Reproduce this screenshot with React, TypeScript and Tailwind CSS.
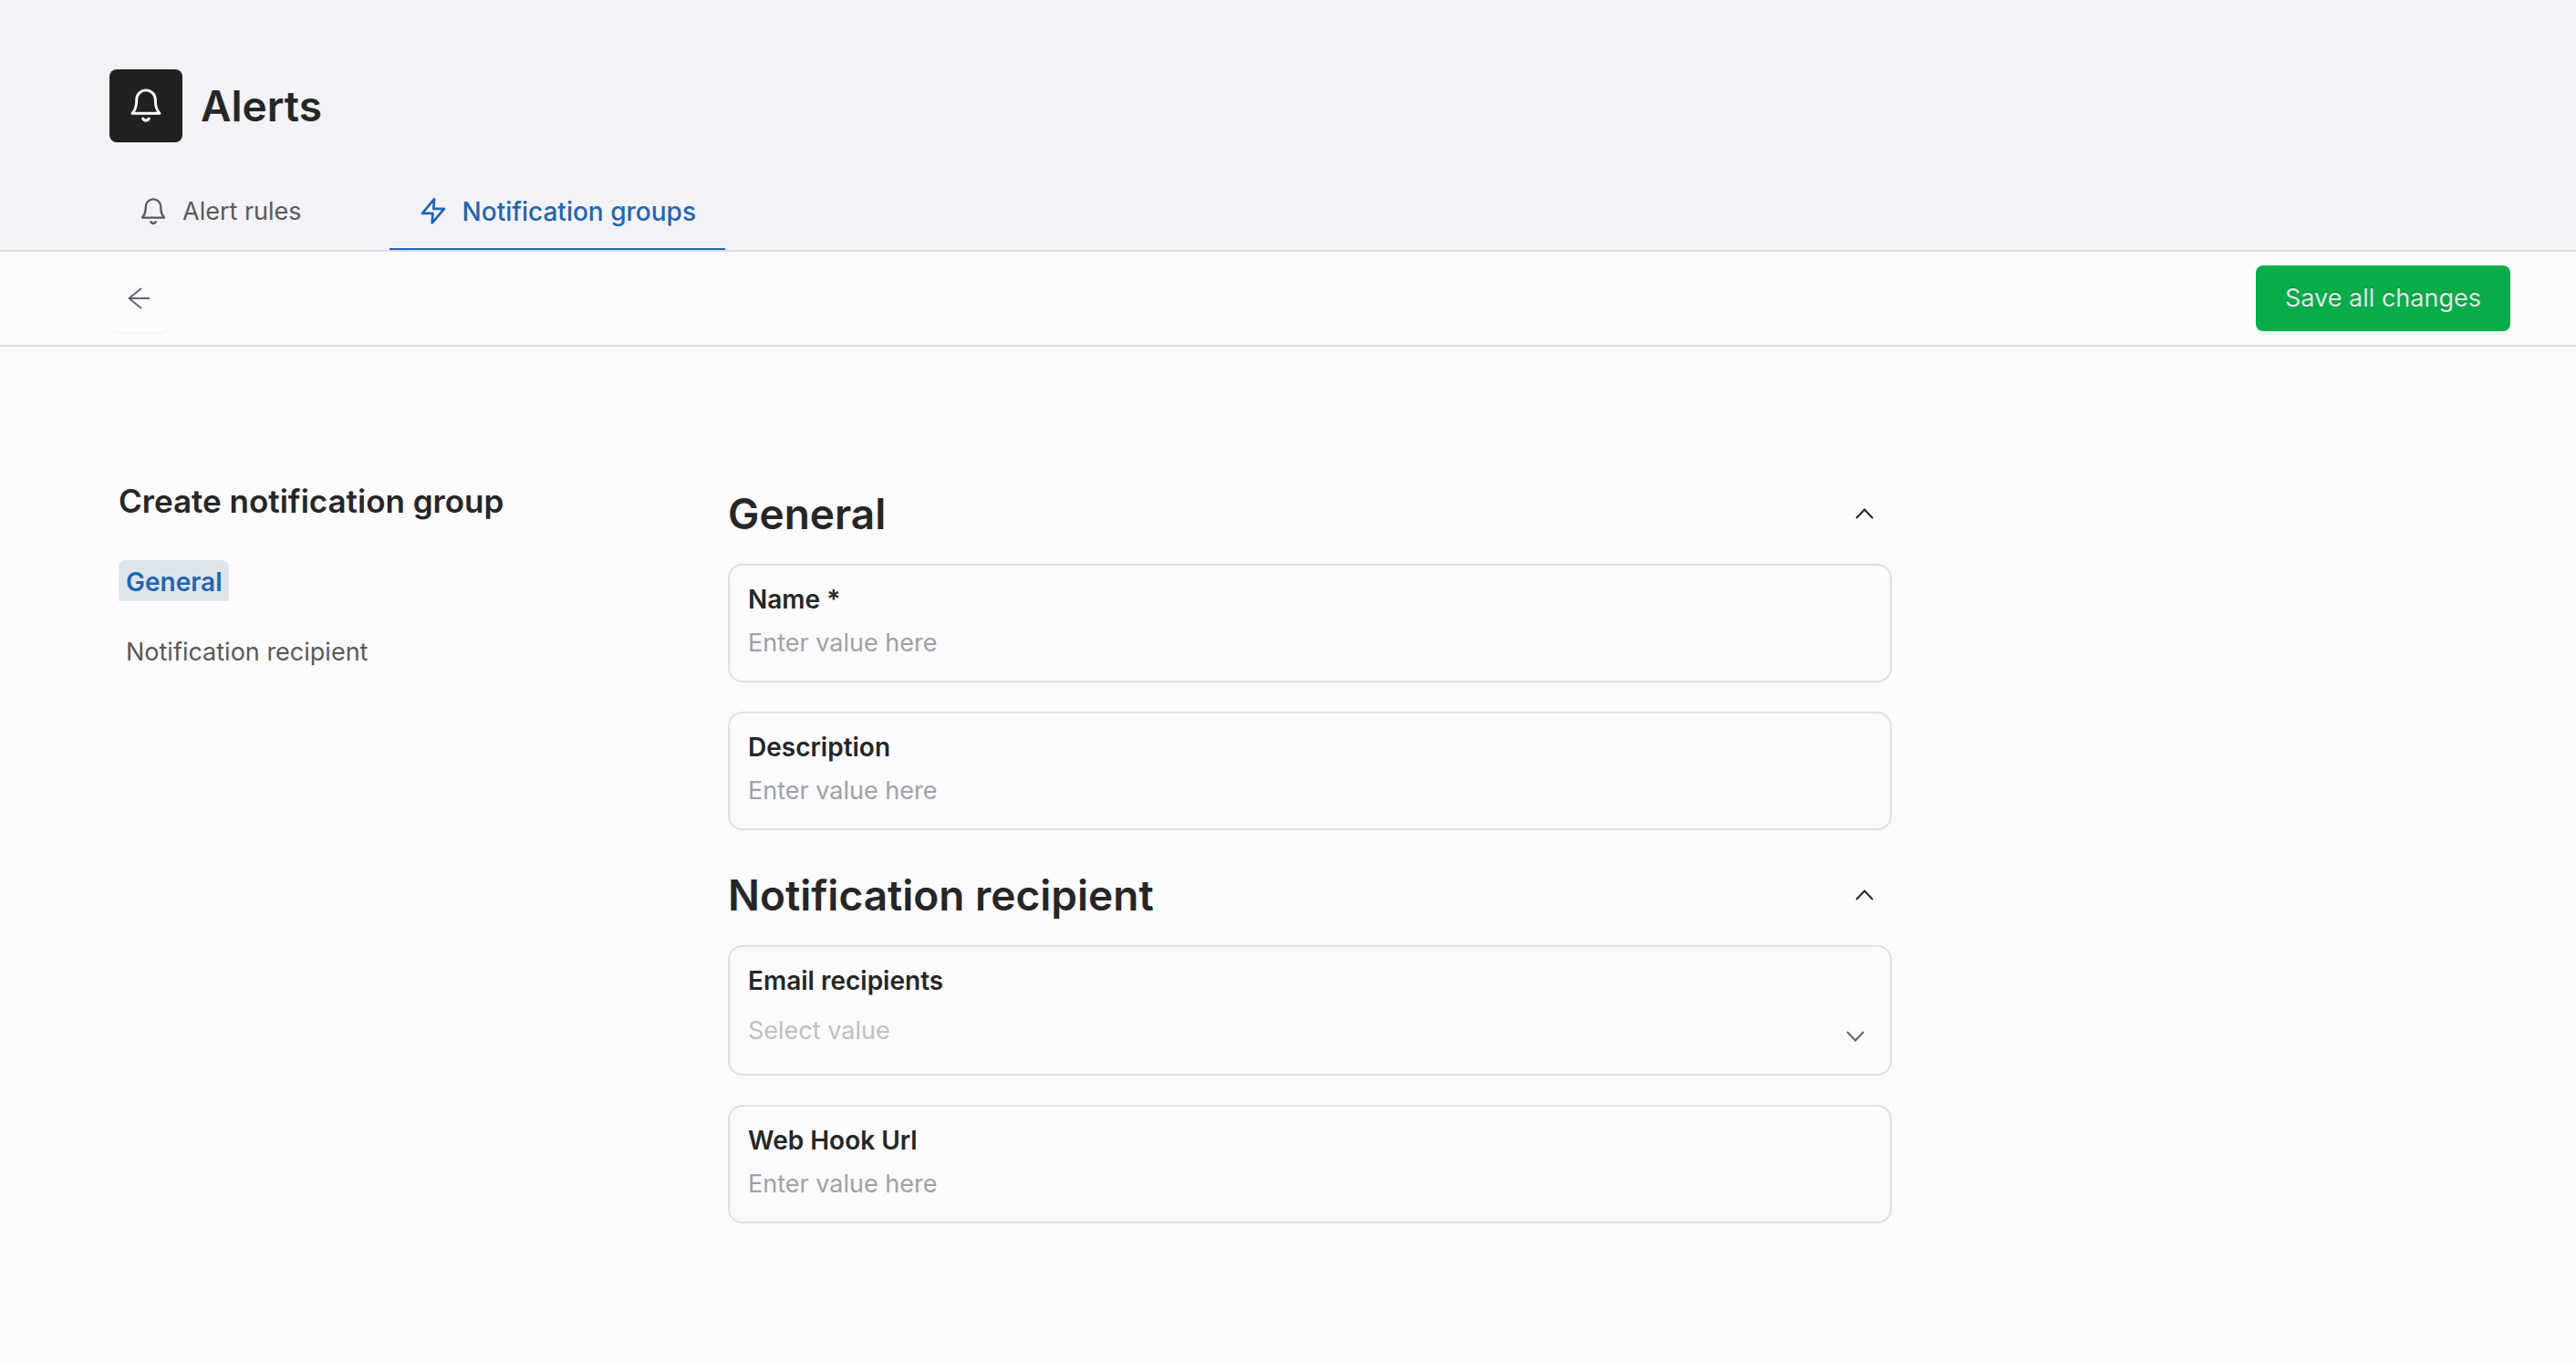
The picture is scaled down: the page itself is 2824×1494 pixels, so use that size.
import { useState } from "react";
import type { ReactNode } from "react";

function BellIcon({ className }: { className: string }) {
  return (
    <svg viewBox="0 0 32 32" fill="none" stroke="currentColor" strokeWidth="2.3" strokeLinecap="round" strokeLinejoin="round" className={className} aria-hidden="true">
      <path d="M4 22.6c2.6-3 3.4-5.6 3.6-9l.2-3.100a8.200 8.200 0 0 1 16.400 0l.2 3.100c.2 3.400 1 6 3.600 9z" />
      <path d="M13.500 27.400c1.200 2 3.800 2 5 0" strokeWidth="2.600" />
    </svg>
  );
}

function BoltIcon({ className }: { className: string }) {
  return (
    <svg viewBox="0 0 24 24" fill="none" stroke="currentColor" strokeWidth="2" strokeLinecap="round" strokeLinejoin="round" className={className} aria-hidden="true">
      <path d="M12.800 1.600 3 13.400h8.600l-.6 7.800 10-11.500h-8.800z" />
    </svg>
  );
}

function Chevron({ className }: { className: string }) {
  return (
    <svg viewBox="0 0 20 12" fill="none" stroke="currentColor" strokeWidth="2" className={className} aria-hidden="true">
      <path d="M1 11 10 1.500 19 11" />
    </svg>
  );
}

function Card({ id, label, className, children }: { id: string; label: string; className: string; children: ReactNode }) {
  return (
    <div className={`flex flex-col gap-1.5 rounded-2xl border-2 border-[#e0e0e3] px-5 pt-4 ${className}`}>
      <label htmlFor={id} className="text-[28px] leading-[42px] font-semibold">
        {label}
      </label>
      {children}
    </div>
  );
}

function TextField({ id, label }: { id: string; label: string }) {
  return (
    <Card id={id} label={label} className="pb-5">
      <input
        id={id}
        type="text"
        placeholder="Enter value here"
        className="h-[42px] w-full bg-transparent leading-[42px] outline-none placeholder:text-[#a0a0a6]"
      />
    </Card>
  );
}

function Section({ title, children }: { title: string; children: ReactNode }) {
  const [open, setOpen] = useState(true);
  return (
    <section className="flex flex-col gap-6">
      <div className="flex items-center justify-between pr-5">
        <h2 className="text-[46px] leading-[62px] font-semibold">{title}</h2>
        <button type="button" aria-label={`Toggle ${title}`} aria-expanded={open} onClick={() => setOpen(!open)}>
          <Chevron className={open ? "h-3 w-5" : "h-3 w-5 rotate-180"} />
        </button>
      </div>
      {open && <div className="flex flex-col gap-8">{children}</div>}
    </section>
  );
}

export default function App() {
  return (
    <div className="min-h-screen bg-[#fbfbfd] font-['Inter',sans-serif] text-[27px] leading-[42px] text-[#262626]">
      <header className="border-b-2 border-[#dedede] bg-[#f3f2f7] px-[120px] pt-[76px]">
        <div className="flex items-center gap-5">
          <div className="flex size-20 items-center justify-center rounded-lg bg-[#212121] text-white">
            <BellIcon className="size-10" />
          </div>
          <h1 className="text-[46px] leading-[62px] font-semibold">Alerts</h1>
        </div>
        <nav className="mt-9 flex gap-16">
          <a href="#rules" className="flex h-[82px] items-center gap-4 border-b-2 border-transparent px-8 text-[#595959]">
            <BellIcon className="size-8" />
            Alert rules
          </a>
          <a href="#groups" aria-current="page" className="flex h-[82px] items-center gap-4 border-b-2 border-[#2265b1] px-8 text-[28px] font-medium text-[#2265b1]">
            <BoltIcon className="size-8" />
            Notification groups
          </a>
        </nav>
      </header>

      <div className="flex h-[104px] items-center justify-between border-b-2 border-[#dedede] pr-[72px] pl-[120px]">
        <button type="button" aria-label="Back" className="flex h-[72px] w-16 items-center justify-center rounded-lg text-[#63636e] shadow-[0_4px_0_rgba(0,0,0,0.016)]">
          <svg viewBox="0 0 24 24" fill="none" stroke="currentColor" strokeWidth="2" className="size-6" aria-hidden="true">
            <path d="M24 12H1.500M15 1 1.500 12 15 23" />
          </svg>
        </button>
        <button type="button" className="h-[72px] rounded-lg bg-[#08ad48] px-8 text-[#dee6eb] shadow-[0_4px_0_rgba(0,0,0,0.043)] [text-shadow:0_-2px_0_rgba(0,0,0,0.12)]">
          Save all changes
        </button>
      </div>

      <div className="flex pr-[72px] pb-[152px] pl-[130px]">
        <aside className="w-[668px] shrink-0 pt-36">
          <h2 className="text-[35px] leading-[50px] font-semibold">Create notification group</h2>
          <nav className="mt-10 flex flex-col items-start gap-8">
            <a href="#general" className="rounded-t-lg rounded-b-xs bg-[#dee6eb] px-2 pt-[3px] text-[28px] font-semibold text-[#2265b1]">
              General
            </a>
            <a href="#recipient" className="px-2 pt-[3px] text-[#595959]">
              Notification recipient
            </a>
          </nav>
        </aside>
        <main className="flex max-w-[1276px] flex-1 flex-col gap-10 pt-[152px]">
          <Section title="General">
            <TextField id="name" label="Name *" />
            <TextField id="description" label="Description" />
          </Section>
          <Section title="Notification recipient">
            <Card id="emails" label="Email recipients" className="pb-[19px]">
              <div className="relative">
                <select id="emails" defaultValue="" className="block h-14 w-full appearance-none bg-transparent text-[#bfbfbf] outline-none">
                  <option value="">Select value</option>
                </select>
                <Chevron className="pointer-events-none absolute right-2 bottom-4 h-3 w-5 rotate-180 text-[#63636e]" />
              </div>
            </Card>
            <TextField id="webhook" label="Web Hook Url" />
          </Section>
        </main>
      </div>
    </div>
  );
}
